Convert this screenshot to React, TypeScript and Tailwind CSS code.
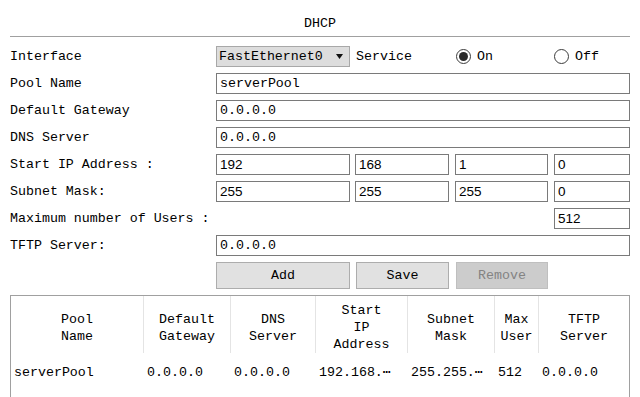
import React from "react"

type RowProps = {
  label: string
  children?: React.ReactNode
  className?: string
}

const Row: React.FC<RowProps> = ({ label, children, className }) => {
  return (
    <div className={"flex items-center " + (className ?? "h-[21px]")}>
      <div className="w-[206px] shrink-0 whitespace-pre">{label}</div>
      {children}
    </div>
  )
}

const Field = ({ value, w, num, ml }: { value: string; w: string; num?: boolean; ml?: string }) => (
  <input
    readOnly
    value={value}
    className={
      "h-[21px] border border-[#7a7a7a] bg-white px-[3px] outline-none text-black " +
      w +
      " " +
      (ml ?? "") +
      " " +
      (num ? "font-['Liberation_Sans',Arial,sans-serif] text-[13.5px]" : "")
    }
  />
)

const Radio = ({ checked, label }: { checked?: boolean; label: string }) => (
  <div className="flex items-center gap-[6px]">
    <span className="flex h-[15px] w-[15px] items-center justify-center rounded-full border border-[#3c3c3c] bg-white">
      {checked && <span className="h-[9px] w-[9px] rounded-full bg-[#2a2a2a]" />}
    </span>
    <span>{label}</span>
  </div>
)

const headers = [
  ["Pool", "Name"],
  ["Default", "Gateway"],
  ["DNS", "Server"],
  ["Start", "IP", "Address"],
  ["Subnet", "Mask"],
  ["Max", "User"],
  ["TFTP", "Server"],
]

const rowData = ["serverPool", "0.0.0.0", "0.0.0.0", "192.168.⋯", "255.255.⋯", "512", "0.0.0.0"]

export default function App() {
  return (
    <div className="h-[397px] w-[640px] overflow-hidden bg-white font-['Liberation_Mono',monospace] text-[13.3px] leading-[17px] text-black">
      {/* title */}
      <div className="mx-[10px] h-[37px] border-b border-[#a0a0a0] pt-[15px] text-center">DHCP</div>

      <div className="mt-[9px] flex flex-col gap-[6px] pl-[10px]">
        <Row label="Interface">
          <div className="flex h-[21px] w-[134px] items-center justify-between border border-[#a8a8a8] bg-[#dddddd] pl-[2px] pr-[6px]">
            <span>FastEthernet0</span>
            <svg width="7" height="5" viewBox="0 0 7 5">
              <path d="M0 0 L7 0 L3.5 5 Z" fill="#111" />
            </svg>
          </div>
          <span className="ml-[6px] w-[100px]">Service</span>
          <div className="w-[98px]">
            <Radio checked label="On" />
          </div>
          <Radio label="Off" />
        </Row>
        <Row label="Pool Name">
          <Field value="serverPool" w="w-[414px]" />
        </Row>
        <Row label="Default Gateway">
          <Field value="0.0.0.0" w="w-[414px]" />
        </Row>
        <Row label="DNS Server">
          <Field value="0.0.0.0" w="w-[414px]" />
        </Row>
        <Row label="Start IP Address :">
          <Field value="192" w="w-[134px]" num />
          <Field value="168" w="w-[94px]" ml="ml-[5px]" num />
          <Field value="1" w="w-[93px]" ml="ml-[6px]" num />
          <Field value="0" w="w-[76px]" ml="ml-[6px]" num />
        </Row>
        <Row label="Subnet Mask:">
          <Field value="255" w="w-[134px]" num />
          <Field value="255" w="w-[94px]" ml="ml-[5px]" num />
          <Field value="255" w="w-[93px]" ml="ml-[6px]" num />
          <Field value="0" w="w-[76px]" ml="ml-[6px]" num />
        </Row>
        <Row label="Maximum number of Users :">
          <Field value="512" w="w-[76px]" ml="ml-[338px]" num />
        </Row>
        <Row label="TFTP Server:">
          <Field value="0.0.0.0" w="w-[414px]" />
        </Row>
        <Row label="" className="h-[27px]">
          <button className="h-[27px] w-[134px] border border-[#adadad] bg-[#e1e1e1] font-normal">Add</button>
          <button className="ml-[6px] h-[27px] w-[93px] border border-[#adadad] bg-[#e1e1e1] font-normal">Save</button>
          <button className="ml-[7px] h-[27px] w-[92px] border border-[#bfbfbf] bg-[#cccccc] font-normal text-[#838383]">
            Remove
          </button>
        </Row>
      </div>

      {/* pool table */}
      <div className="mx-[10px] mt-[6px] h-[120px] border-x border-t border-[#a0a0a0]">
        <div className="grid grid-cols-[133px_87px_85px_92px_87px_44px_90px]">
          {headers.map((h, i) => (
            <div
              key={i}
              className={
                "flex h-[57px] flex-col items-center justify-center pt-[6px] text-center " +
                (i < headers.length - 1 ? "border-r border-[#e4e4e4]" : "")
              }
            >
              {h.map((line) => (
                <span key={line}>{line}</span>
              ))}
            </div>
          ))}
          {rowData.map((v, i) => (
            <div key={i} className="whitespace-nowrap pl-[3px] pt-[11px]">
              {v}
            </div>
          ))}
        </div>
      </div>
    </div>
  )
}
